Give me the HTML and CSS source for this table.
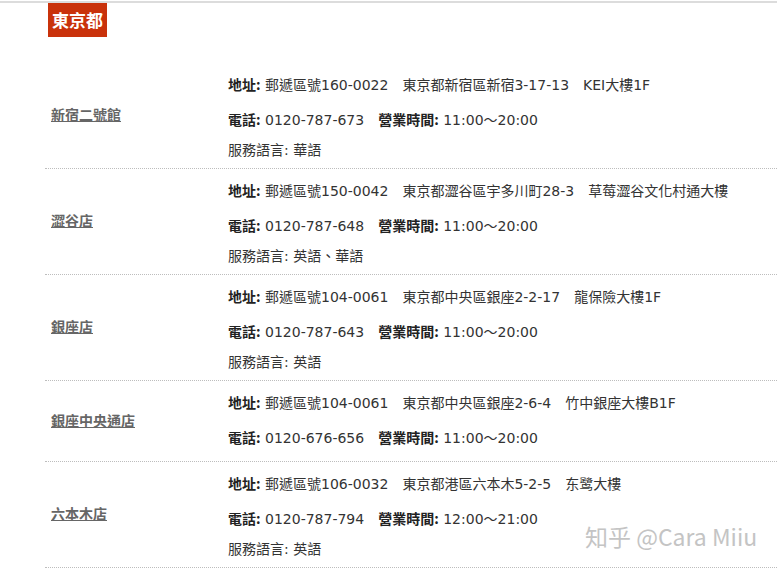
FILE: index.html
```html
<!DOCTYPE html>
<html lang="zh-Hant">
<head>
<meta charset="utf-8">
<link rel="stylesheet" href="styles.css">
</head>
<body>
<div class="page">
  <div class="topline"></div>
  <div class="region"><h2 class="region-title">東京都</h2></div>
  <div class="stores">
    <div class="store">
      <div class="store-name"><a href="#">新宿二號館</a></div>
      <div class="store-info">
        <div class="line"><b>地址:</b> 郵遞區號160-0022　東京都新宿區新宿3-17-13　KEI大樓1F</div>
        <div class="line tel"><b>電話:</b> 0120-787-673　<b>營業時間:</b> 11:00～20:00</div>
        <div class="line lang">服務語言: 華語</div>
      </div>
    </div>
    <div class="store">
      <div class="store-name"><a href="#">澀谷店</a></div>
      <div class="store-info">
        <div class="line"><b>地址:</b> 郵遞區號150-0042　東京都澀谷區宇多川町28-3　草莓澀谷文化村通大樓</div>
        <div class="line tel"><b>電話:</b> 0120-787-648　<b>營業時間:</b> 11:00～20:00</div>
        <div class="line lang">服務語言: 英語、華語</div>
      </div>
    </div>
    <div class="store">
      <div class="store-name"><a href="#">銀座店</a></div>
      <div class="store-info">
        <div class="line"><b>地址:</b> 郵遞區號104-0061　東京都中央區銀座2-2-17　龍保險大樓1F</div>
        <div class="line tel"><b>電話:</b> 0120-787-643　<b>營業時間:</b> 11:00～20:00</div>
        <div class="line lang">服務語言: 英語</div>
      </div>
    </div>
    <div class="store">
      <div class="store-name"><a href="#">銀座中央通店</a></div>
      <div class="store-info">
        <div class="line"><b>地址:</b> 郵遞區號104-0061　東京都中央區銀座2-6-4　竹中銀座大樓B1F</div>
        <div class="line tel"><b>電話:</b> 0120-676-656　<b>營業時間:</b> 11:00～20:00</div>
      </div>
    </div>
    <div class="store">
      <div class="store-name"><a href="#">六本木店</a></div>
      <div class="store-info">
        <div class="line"><b>地址:</b> 郵遞區號106-0032　東京都港區六本木5-2-5　东鹭大樓</div>
        <div class="line tel"><b>電話:</b> 0120-787-794　<b>營業時間:</b> 12:00～21:00</div>
        <div class="line lang">服務語言: 英語</div>
      </div>
    </div>
  </div>
  <div class="watermark">知乎 @Cara Miiu</div>
</div>
</body>
</html>
```
FILE: styles.css
```css
* { box-sizing: border-box; }
html, body { margin: 0; padding: 0; background: #fff; }
body {
  font-family: "DejaVu Sans", "Noto Sans CJK TC", sans-serif;
  font-size: 14px;
  color: #333;
  overflow: hidden;
}
.page { position: relative; width: 777px; height: 568px; overflow: hidden; }
.topline { height: 3px; border-top: 1px solid #fff; background: #dcdcdc; }
.region { padding-left: 48px; }
.region-title {
  display: inline-block;
  margin: 0;
  height: 34px;
  width: 59px;
  background: #c9320b;
  color: #fff;
  font-family: "Noto Sans CJK TC", sans-serif;
  font-size: 17px;
  font-weight: 700;
  line-height: 34px;
  text-align: center;
}
.stores { margin-top: 26px; padding-left: 45px; }
.store {
  display: flex;
  border-bottom: 1px dotted #bdbdbd;
}
.store-name {
  width: 183px;
  display: flex;
  align-items: center;
  padding-left: 6px;
  padding-bottom: 3px;
}
.store-name a {
  color: #666;
  font-family: "Noto Sans CJK TC", sans-serif;
  font-size: 14px;
  font-weight: 700;
  line-height: 20px;
  text-decoration: underline;
}
.store-info { padding: 11px 0 14px; }
.store-info .line { height: 20px; line-height: 20px; white-space: nowrap; }
.store-info .line b { color: #222; font-weight: 700; font-family: "Noto Sans CJK TC", sans-serif; }
.store-info .tel { margin-top: 15px; }
.store-info .lang { margin-top: 11px; margin-bottom: -6px; }
.watermark {
  position: absolute;
  left: 585px;
  top: 520px;
  font-family: "Noto Sans CJK SC", sans-serif;
  font-size: 23px;
  line-height: 32px;
  color: #c4c4c4;
}
```
